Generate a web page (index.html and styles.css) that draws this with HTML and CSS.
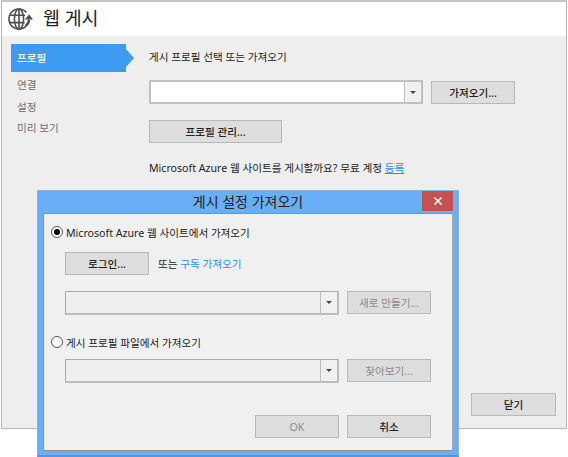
FILE: index.html
```html
<!DOCTYPE html>
<html lang="ko">
<head>
<meta charset="utf-8">
<title>웹 게시</title>
<link rel="stylesheet" href="styles.css">
</head>
<body>
<div class="window">
  <header class="header">
    <svg class="logo" width="26" height="26" viewBox="0 0 26 26" fill="none" stroke="#4f4f4f" stroke-width="1.6">
      <path d="M19.5 6.5A10 10 0 1 0 21.5 16"/>
      <ellipse cx="12" cy="13" rx="4.6" ry="10"/>
      <path d="M3 9.2h15M2.6 16.6h15M12 3v20"/>
      <path d="M18.5 19.5c2.2-1.2 3.5-3.3 3.5-6" stroke-width="2.4"/>
      <path d="M18 13.5h8l-4-5.2z" fill="#4f4f4f" stroke="none"/>
    </svg>
    <h1 class="title">웹 게시</h1>
  </header>
  <div class="body">
    <nav class="nav">
      <div class="tab">프로필</div>
      <div class="nav-item first">연결</div>
      <div class="nav-item">설정</div>
      <div class="nav-item">미리 보기</div>
    </nav>
    <main class="main">
      <div class="label">게시 프로필 선택 또는 가져오기</div>
      <div class="row row-combo">
        <div class="combo combo-main"><span class="arrow"></span></div>
        <button class="btn">가져오기...</button>
      </div>
      <button class="btn btn-manage">프로필 관리...</button>
      <p class="promo">Microsoft Azure 웹 사이트를 게시할까요? 무료 계정 <a class="link underline">등록</a></p>
    </main>
  </div>
  <div class="window-foot"><button class="btn btn-close">닫기</button></div>
</div>

<section class="dialog">
  <div class="dialog-bar">
    <div class="dialog-title">게시 설정 가져오기</div>
    <div class="close"><svg width="10" height="10" viewBox="0 0 10 10" stroke="#fff" stroke-width="1.7"><path d="M1.5 1.5l7 7M8.5 1.5l-7 7"/></svg></div>
  </div>
  <div class="dialog-body">
    <div class="radio-row"><span class="radio on"></span><span>Microsoft Azure 웹 사이트에서 가져오기</span></div>
    <div class="row row-login">
      <button class="btn">로그인...</button>
      <span class="or">또는 <a class="link">구독 가져오기</a></span>
    </div>
    <div class="row row-sub1">
      <div class="combo"><span class="arrow"></span></div>
      <button class="btn off">새로 만들기...</button>
    </div>
    <div class="radio-row second"><span class="radio"></span><span>게시 프로필 파일에서 가져오기</span></div>
    <div class="row row-sub2">
      <div class="combo"><span class="arrow"></span></div>
      <button class="btn off">찾아보기...</button>
    </div>
    <div class="row row-actions">
      <button class="btn off">OK</button>
      <button class="btn">취소</button>
    </div>
  </div>
</section>
</body>
</html>
```

FILE: styles.css
```css
* { box-sizing: border-box; }
html, body { margin: 0; padding: 0; }
body {
  width: 568px;
  height: 457px;
  background: #fff;
  overflow: hidden;
  position: relative;
  font-family: "Noto Sans", "Noto Sans CJK KR", sans-serif;
  font-size: 10.6px;
  color: #222;
}
.window {
  width: 566px;
  height: 429px;
  margin-left: 1px;
  border: 1px solid #b4b4b4;
  border-top: 2px solid #c4c4c4;
  background: #eeeeee;
  display: flex;
  flex-direction: column;
}
.header {
  height: 34px;
  background: #fff;
  display: flex;
  align-items: center;
  padding-left: 5px;
  flex: none;
}
.logo { flex: none; }
.title {
  margin: 0 0 2px 10px;
  font-size: 18.4px;
  font-weight: 400;
  color: #222;
  line-height: 24px;
}
.body { display: flex; flex: 1; min-height: 0; padding-top: 8px; }
.nav { width: 147px; flex: none; padding-left: 9px; }
.tab {
  width: 123px;
  height: 28px;
  padding: 0 0 0 6px;
  line-height: 28px;
  color: #fff;
  font-weight: 500;
  background: #3d9bf2;
  clip-path: polygon(0 0, 115px 0, 115px 5px, 123px 14px, 115px 23px, 115px 100%, 0 100%);
}
.nav-item { height: 21.5px; line-height: 21.5px; padding-left: 6px; color: #707070; }
.nav-item.first { margin-top: 3px; }
.main { flex: 1; padding-top: 5px; }
.label { line-height: 16px; }
.row { display: flex; }
.row-combo { margin-top: 15px; width: 366px; justify-content: space-between; align-items: center; }
.combo {
  width: 274px;
  height: 24px;
  border: 1px solid #aaaaaa;
  border-right-width: 2px;
  border-bottom-width: 2px;
  border-right-color: #bdbdbd;
  border-bottom-color: #bdbdbd;
  background: #eeeeee;
  display: flex;
  justify-content: flex-end;
}
.combo-main { background: #fff; border: 2px solid #c0c0c0; }
.arrow {
  width: 17px;
  background: #f0f0f0;
  border-left: 1px solid #bdbdbd;
  position: relative;
}
.arrow::after {
  content: "";
  position: absolute;
  left: 5px;
  top: 9px;
  border: 3px solid transparent;
  border-top: 3px solid #444;
  border-bottom: 0;
}
.btn {
  width: 84px;
  height: 23px;
  border: 1px solid #b8b8b8;
  outline: none;
  background: #dddddd;
  font: inherit;
  font-weight: 500;
  color: #222;
  padding: 0;
  flex: none;
}
.btn.off { color: #8a8a8a; font-weight: 400; }
.btn-manage { display: block; width: 133px; margin-top: 16px; }
.btn-close { width: 85px; }
.promo { margin: 17px 0 0; line-height: 16px; }
.link { color: #2b8ff0; }
.underline { text-decoration: underline; }
.window-foot { display: flex; justify-content: flex-end; padding: 0 10px 12px 0; flex: none; }

.dialog {
  position: absolute;
  left: 37px;
  top: 190px;
  width: 422px;
  height: 267px;
  background: #6aaef7;
  border: 1px solid #8fb2d8;
  border-bottom: 2px solid #5a95d6;
  padding: 0 5px 4px;
  display: flex;
  flex-direction: column;
}
.dialog-bar { height: 22px; flex: none; position: relative; }
.dialog-title {
  text-align: center;
  font-size: 14px;
  line-height: 21px;
  color: #222;
}
.close {
  position: absolute;
  right: 0;
  top: 0;
  width: 31px;
  height: 20px;
  background: #c75050;
  display: flex;
  align-items: center;
  justify-content: center;
}
.close svg { display: block; }
.dialog-body {
  flex: 1;
  background: #f0f0f0;
  border: 1px solid #8f8f8f;
  border-right-color: #a8a8a8;
  padding: 10px 0 0 7px;
  display: flex;
  flex-direction: column;
}
.radio-row { display: flex; align-items: center; gap: 3px; height: 16px; }
.radio-row.second { margin-top: 19px; }
.radio {
  width: 12px;
  height: 12px;
  border: 1px solid #555;
  border-radius: 50%;
  background: #fff;
  flex: none;
  display: flex;
  align-items: center;
  justify-content: center;
}
.radio.on::after {
  content: "";
  width: 6px;
  height: 6px;
  border-radius: 50%;
  background: #000;
}
.row-login { margin: 12px 0 0 14px; align-items: center; }
.or { margin-left: 9px; }
.row-sub1 { margin: 16px 0 0 14px; gap: 8px; }
.row-sub2 { margin: 9px 0 0 14px; gap: 8px; }
.row-actions { margin: 32px 0 0 204px; gap: 8px; }
```
